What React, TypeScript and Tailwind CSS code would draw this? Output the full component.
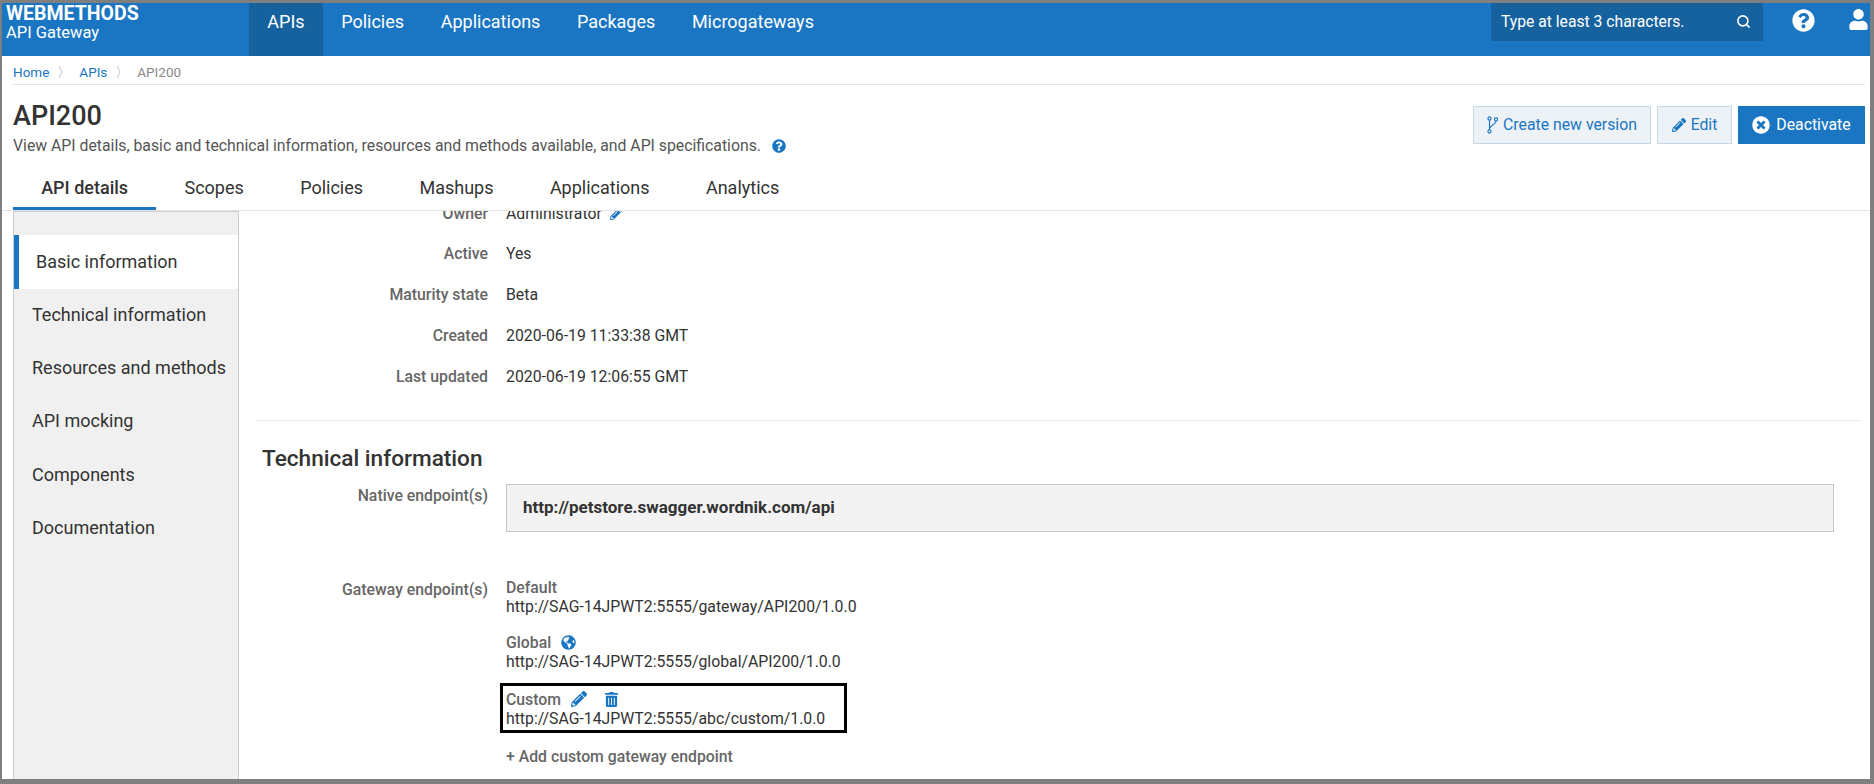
import { Search } from "lucide-react";
import { FaGlobeAmericas, FaPencilAlt, FaQuestionCircle, FaTimesCircle, FaTrashAlt, FaUser } from "react-icons/fa";

const topNav = ["APIs", "Policies", "Applications", "Packages", "Microgateways"];
const tabs = ["API details", "Scopes", "Policies", "Mashups", "Applications", "Analytics"];
const sideItems = ["Technical information", "Resources and methods", "API mocking", "Components", "Documentation"];
const basicRows = [
  ["Active", "Yes"],
  ["Maturity state", "Beta"],
  ["Created", "2020-06-19 11:33:38 GMT"],
  ["Last updated", "2020-06-19 12:06:55 GMT"],
];

function BranchIcon() {
  return (
    <svg width="11" height="18" viewBox="0 0 11 18" fill="none" stroke="#1a76c2" strokeWidth="1.1">
      <circle cx="2.5" cy="2.5" r="1.6" />
      <circle cx="2.5" cy="15.5" r="1.6" />
      <circle cx="9" cy="3.5" r="1.6" />
      <path d="M2.5 4.1V13.9" />
      <path d="M9 5.1C9 9 3.5 8.5 2.5 12.5" />
    </svg>
  );
}

export default function App() {
  return (
    <div className="flex h-[784px] w-[1874px] flex-col overflow-hidden border-t-[3px] border-r-4 border-b-[5px] border-l-2 border-[#7f7f7f] bg-white font-['Roboto',sans-serif] text-[15.8px] text-[#333]">
      {/* top bar */}
      <header className="flex h-[53px] shrink-0 bg-[#1a76c2] text-white">
        <div className="w-[247px] pl-1 pt-[2px]">
          <div className="text-[19.5px] font-bold leading-[18px]">WEBMETHODS</div>
          <div className="text-[16.5px] leading-[19px]">API Gateway</div>
        </div>
        <nav className="flex">
          {topNav.map((n, i) => (
            <div key={n} className={"px-[18.3px] pt-2 text-[18px] leading-[22px] " + (i === 0 ? "bg-[#16629f]" : "")}>
              {n}
            </div>
          ))}
        </nav>
        <div className="ml-auto mr-[29px] flex h-[38px] w-[272px] items-center justify-between bg-[#16629f] pl-[10px] pr-3 text-[15.7px]">
          <span>Type at least 3 characters.</span>
          <Search size={15} strokeWidth={2.5} className="-mt-[2px]" />
        </div>
        <FaQuestionCircle size={23} className="mr-[33px] mt-[6px]" />
        <FaUser size={21} className="mr-px mt-[6px]" />
      </header>

      {/* breadcrumb */}
      <div className="ml-[11px] mr-[5px] flex h-[29px] shrink-0 items-center border-b border-[#e0e6ec] pt-1 text-[13.5px]">
        <span className="text-[#1a76c2]">Home</span>
        <span className="w-[30px] text-center text-[#999]">〉</span>
        <span className="text-[#1a76c2]">APIs</span>
        <span className="w-[30px] text-center text-[#999]">〉</span>
        <span className="text-[#888]">API200</span>
      </div>

      {/* title */}
      <div className="flex shrink-0 justify-between pl-[11px] pr-[5px]">
        <div className="pt-[15px]">
          <h1 className="text-[27px] font-medium leading-[32px]">API200</h1>
          <p className="mt-[5px] flex items-center leading-[18px] text-[#555]">
            View API details, basic and technical information, resources and methods available, and API specifications.
            <FaQuestionCircle size={14} className="ml-[11px] text-[#1a76c2]" />
          </p>
        </div>
        <div className="flex gap-[6px] pt-[21px]">
          <button className="flex h-[38px] w-[178px] items-center justify-center gap-[5px] border border-[#c5d9e6] bg-[#edf2f6] text-[#1a76c2]">
            <BranchIcon />Create new version
          </button>
          <button className="flex h-[38px] w-[75px] items-center justify-center gap-[5px] border border-[#c5d9e6] bg-[#edf2f6] text-[#1a76c2]">
            <FaPencilAlt size={14} />Edit
          </button>
          <button className="flex h-[38px] w-[127px] items-center justify-center gap-[6px] bg-[#1a76c2] text-white">
            <FaTimesCircle size={18} />Deactivate
          </button>
        </div>
      </div>

      {/* tabs */}
      <div className="mt-[2px] flex h-[54px] shrink-0 border-b border-[#e5e5e5] pl-[11px] text-[18px]">
        {tabs.map((t, i) => (
          <div key={t} className={"px-[28.2px] pt-[17px] " + (i === 0 ? "border-b-[3px] border-[#1a76c2] font-medium" : "")}>
            {t}
          </div>
        ))}
      </div>

      <div className="flex min-h-0 flex-1 pl-[11px]">
        {/* side menu */}
        <aside className="w-[226px] shrink-0 border-x border-t border-[#ccc] bg-[#f0f0f0] pt-[23px] text-[18px]">
          <div className="flex h-[54px] items-center border-l-[5px] border-[#1a76c2] bg-white pb-[2px] pl-[17px]">Basic information</div>
          {sideItems.map((s) => (
            <div key={s} className="flex h-[53.2px] items-center pb-[2px] pl-[18px]">{s}</div>
          ))}
        </aside>

        {/* scrolled content */}
        <main className="min-w-0 flex-1 overflow-hidden pl-4 pr-[9px]">
          <div className="-mt-[18px]">
            <div className="flex h-[40.8px] items-center">
              <div className="w-[251px] pr-[18px] text-right font-medium text-[#666]">Owner</div>
              <div className="flex items-center gap-2">Administrator <FaPencilAlt size={13} className="text-[#1a76c2]" /></div>
            </div>
            {basicRows.map(([k, v]) => (
              <div key={k} className="flex h-[40.8px] items-center">
                <div className="w-[251px] pr-[18px] text-right font-medium text-[#666]">{k}</div>
                <div>{v}</div>
              </div>
            ))}

            <div className="mt-[23px] border-t border-[#eaeaea] pl-[7px] pt-[25px]">
              <h2 className="text-[22.6px] font-medium leading-[26px]">Technical information</h2>
            </div>

            <div className="mt-3 flex">
              <div className="w-[251px] pr-[18px] pt-[2px] text-right font-medium leading-[20px] text-[#666]">Native endpoint(s)</div>
              <div className="flex h-[48px] w-[1328px] items-center border border-[#c8c8c8] bg-[#f3f3f3] pl-4 text-[17px] font-bold">
                http://petstore.swagger.wordnik.com/api
              </div>
            </div>

            <div className="mt-[46px] flex leading-[19px]">
              <div className="w-[251px] pr-[18px] pt-[2px] text-right font-medium text-[#666]">Gateway endpoint(s)</div>
              <div>
                <div className="font-medium text-[#666]">Default</div>
                <div>http://SAG-14JPWT2:5555/gateway/API200/1.0.0</div>

                <div className="mt-[17px] flex items-center gap-[10px] font-medium text-[#666]">
                  Global <FaGlobeAmericas size={15} className="text-[#1a76c2]" />
                </div>
                <div>http://SAG-14JPWT2:5555/global/API200/1.0.0</div>

                <div className="-ml-[6px] mt-3 h-[50px] w-[347px] border-[3px] border-black pl-[3px] pt-1">
                  <div className="flex items-center font-medium text-[#666]">
                    Custom
                    <FaPencilAlt size={16} className="ml-[10px] text-[#1a76c2]" />
                    <FaTrashAlt size={15} className="ml-[17px] text-[#1a76c2]" />
                  </div>
                  <div>http://SAG-14JPWT2:5555/abc/custom/1.0.0</div>
                </div>

                <div className="mt-[14px] font-medium text-[#666]">+ Add custom gateway endpoint</div>
              </div>
            </div>
          </div>
        </main>
      </div>
    </div>
  );
}
